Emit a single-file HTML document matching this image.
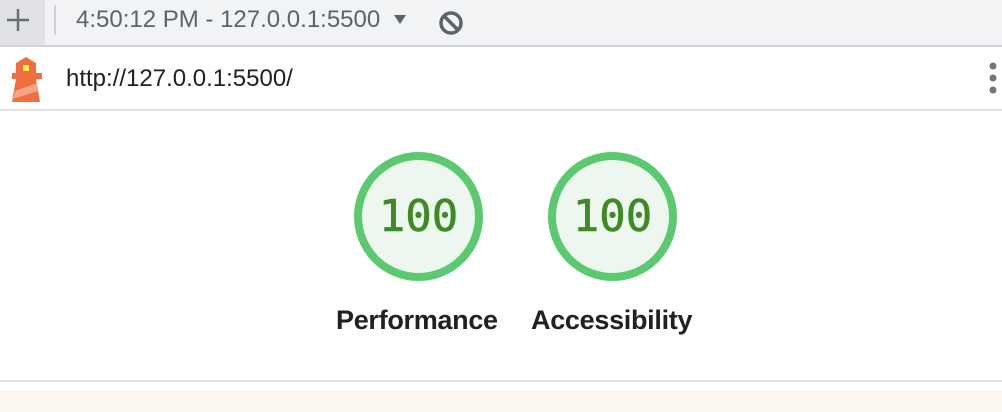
<!DOCTYPE html>
<html><head><style>
body{margin:0;width:1002px;height:412px;overflow:hidden;background:#fff;font-family:"Liberation Sans",sans-serif;position:relative}
.top{position:absolute;left:0;top:0;width:1002px;height:45px;background:#f1f3f4;border-bottom:2px solid #d0d2d5}
.plus{position:absolute;left:0;top:0;width:45px;height:45px;background:#dfe1e5;border-bottom-right-radius:3px}
.div{position:absolute;left:54px;top:5px;width:2px;height:30px;background:#cfd1d4}
.t{position:absolute;left:76px;top:6px;font-size:24px;color:#5f6368;white-space:nowrap}
.row{position:absolute;left:0;top:47px;width:1002px;height:62px;border-bottom:2px solid #e0e0e0}
.url{position:absolute;left:66px;top:18px;font-size:24px;color:#212121}
.g{position:absolute;width:113px;height:113px;border:8px solid #5bc96f;border-radius:50%;background:#edf7ef;top:152px;text-align:center;line-height:113px;font-family:"DejaVu Sans Mono","Liberation Mono",monospace;font-size:44px;color:#3c8b24;-webkit-text-stroke:0.6px #3c8b24}
.l{position:absolute;top:305px;font-size:27px;color:#212121;font-weight:bold;letter-spacing:-0.3px;white-space:nowrap}
</style></head><body>
<div class="top">
<div class="plus"><svg width="45" height="45"><path d="M18 9V31M7 20H29" stroke="#6a6d70" stroke-width="2.5"/></svg></div>
<div class="div"></div>
<div class="t">4:50:12 PM - 127.0.0.1:5500</div>
<svg style="position:absolute;left:393px;top:14px" width="14" height="12"><path d="M1 1H13L7 10Z" fill="#5f6368"/></svg>
<svg style="position:absolute;left:437px;top:9px" width="28" height="28"><circle cx="14" cy="14" r="10" fill="none" stroke="#5f6368" stroke-width="3.5"/><path d="M7 7L21 21" stroke="#5f6368" stroke-width="3.5"/></svg>
</div>
<div class="row">
<svg style="position:absolute;left:10px;top:8px" width="32" height="48"><path d="M6 8L16 2L26 8Z" fill="#f06f3f"/><rect x="6" y="8" width="20" height="10" fill="#f06f3f"/><rect x="13" y="10" width="6" height="6" fill="#fff44f"/><rect x="2" y="18" width="30" height="6" fill="#f06f3f"/><path d="M6 24H26L30 47H2Z" fill="#f06f3f"/><path d="M5 36L27 28L28 36L3 44Z" fill="#f5a584"/></svg>
<div class="url">http://127.0.0.1:5500/</div>
<svg style="position:absolute;left:987px;top:15px" width="12" height="36"><circle cx="6" cy="4" r="3.5" fill="#757575"/><circle cx="6" cy="16" r="3.5" fill="#757575"/><circle cx="6" cy="28" r="3.5" fill="#757575"/></svg>
</div>
<div class="g" style="left:354px">100</div>
<div class="g" style="left:548px">100</div>
<div class="l" style="left:336px">Performance</div>
<div class="l" style="left:531px">Accessibility</div>
<div style="position:absolute;left:0;top:380px;width:1002px;height:2px;background:#e0e0e0"></div>
<div style="position:absolute;left:0;top:390px;width:1002px;height:22px;background:#fcf6f0"></div>
</body></html>
